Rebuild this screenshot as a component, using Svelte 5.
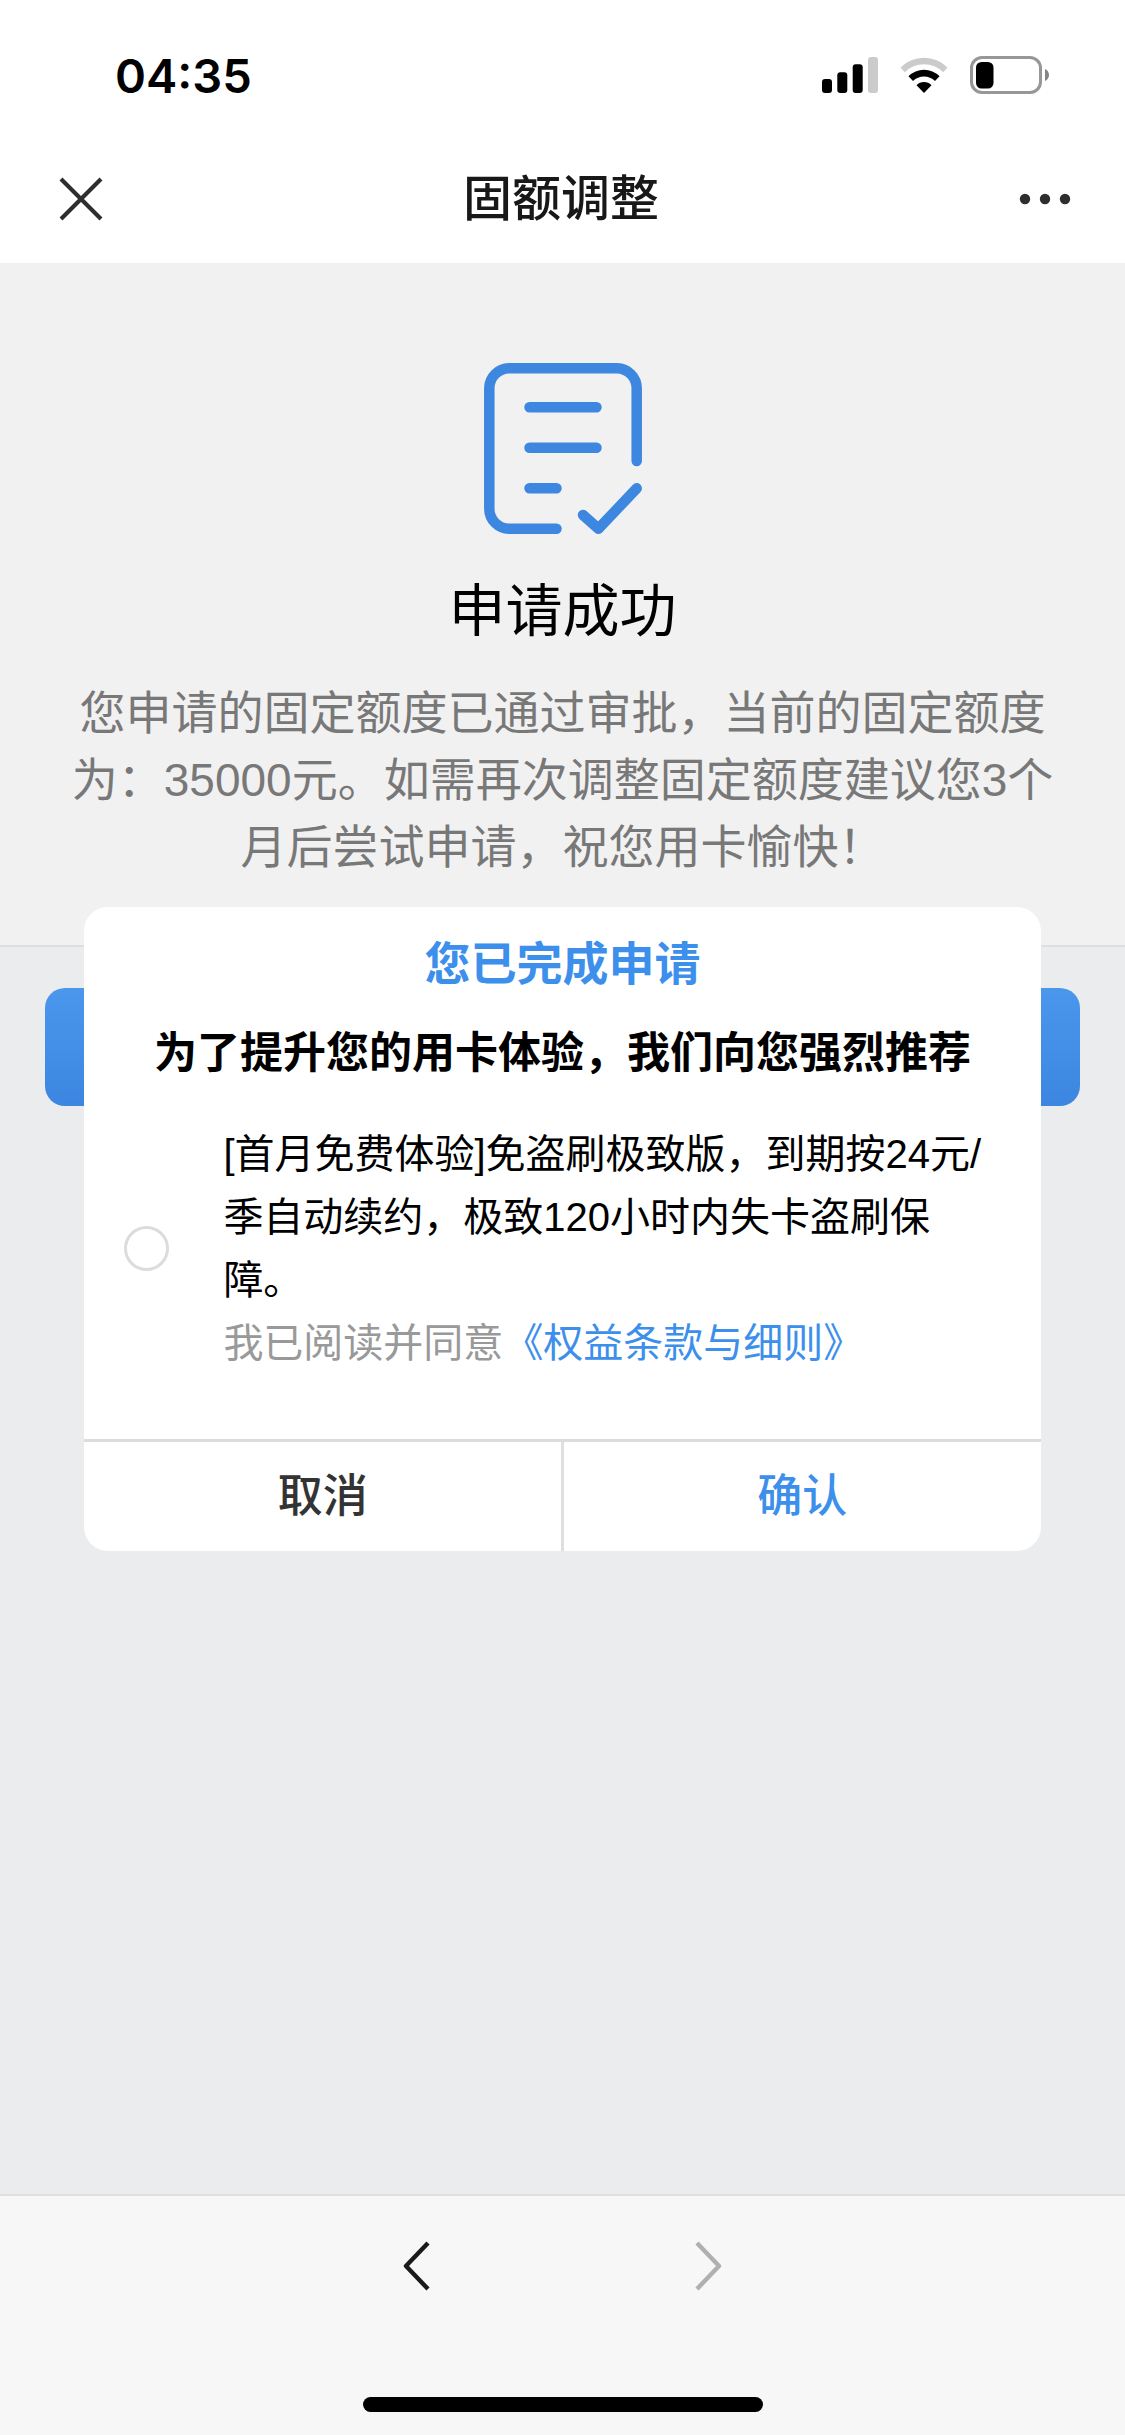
<script lang="ts">
  let agreed = $state(false);
  let dialogOpen = $state(true);

  function closeDialog() {
    dialogOpen = false;
  }
</script>

<div class="screen">
  <div class="status-bar">
    <span class="time">04:35</span>
    <div class="status-icons">
      <svg width="56" height="36" viewBox="0 0 56 36" aria-hidden="true">
        <rect x="0" y="22" width="10" height="14" rx="3" />
        <rect x="15.3" y="15.3" width="10" height="20.7" rx="3" />
        <rect x="30.7" y="7.3" width="10" height="28.7" rx="3" />
        <rect x="46" y="0" width="10" height="36" rx="3" fill="#cbcbcb" />
      </svg>
      <svg width="48" height="36" viewBox="0 0 48 36" aria-hidden="true">
        <path d="M0.5 10.5 A33.5 33.5 0 0 1 47.5 10.5 L43.2 15.2 A27.2 27.2 0 0 0 4.8 15.2 Z" fill="#cbcbcb" />
        <path d="M8.5 19.2 A22 22 0 0 1 39.5 19.2 L35 24 A15.6 15.6 0 0 0 13 24 Z" />
        <path d="M16.5 28.2 A10.4 10.4 0 0 1 31.5 28.2 L24 36 Z" />
      </svg>
      <svg width="80" height="38" viewBox="0 0 80 38" aria-hidden="true">
        <rect x="1.5" y="1.5" width="69" height="35" rx="10.5" fill="none" stroke="#979797" stroke-width="3" />
        <rect x="6" y="6" width="17.5" height="26.500" rx="5.5" />
        <path d="M75 13 C77.600 14 79 16.500 79 19 C79 21.500 77.600 24 75 25 Z" fill="#858585" />
      </svg>
    </div>
  </div>

  <header class="nav-bar">
    <button class="icon-btn" aria-label="关闭">
      <svg width="44" height="44" viewBox="0 0 44 44" fill="none" stroke="#2e2e2e" stroke-width="4.2">
        <path d="M2 2 L42 42 M42 2 L2 42" />
      </svg>
    </button>
    <h1>固额调整</h1>
    <button class="icon-btn" aria-label="更多">
      <svg width="52" height="44" viewBox="0 0 52 44" fill="#2e2e2e">
        <circle cx="6" cy="22" r="5.2" />
        <circle cx="26" cy="22" r="5.2" />
        <circle cx="46" cy="22" r="5.2" />
      </svg>
    </button>
  </header>

  <main>
    <section class="result">
      <svg
        width="158"
        height="171"
        viewBox="0 0 158 171"
        fill="none"
        stroke="#3d87e0"
        stroke-width="10.5"
        stroke-linecap="round"
        stroke-linejoin="round"
        aria-hidden="true"
      >
        <path d="M152.700 98 V25 A20 20 0 0 0 133 5.300 H25 A20 20 0 0 0 5.300 25 V146 A20 20 0 0 0 25 165.700 H72.500" />
        <path d="M45.500 44.200 H112.500 M45.500 84.800 H112.500 M45.500 125.300 H72.500" />
        <path d="M99 152 L114.500 165.700 L152.700 125.300" />
      </svg>
      <h2>申请成功</h2>
      <p>您申请的固定额度已通过审批，当前的固定额度为：35000元。如需再次调整固定额度建议您3个月后尝试申请，祝您用卡愉快！</p>
    </section>

    <button class="primary-btn" aria-label="完成"></button>

    {#if dialogOpen}
      <div class="overlay">
        <div class="dialog" role="dialog" aria-labelledby="dialog-title">
          <h3 id="dialog-title">您已完成申请</h3>
          <p class="subtitle">为了提升您的用卡体验，我们向您强烈推荐</p>

          <div class="offer">
            <input id="offer" type="checkbox" bind:checked={agreed} />
            <div class="offer-text">
              <label for="offer">[首月免费体验]免盗刷极致版，到期按24元/季自动续约，极致120小时内失卡盗刷保障。</label>
              <p class="terms">我已阅读并同意<a href="#terms">《权益条款与细则》</a></p>
            </div>
          </div>

          <div class="actions">
            <button onclick={closeDialog}>取消</button>
            <button class="confirm" onclick={closeDialog}>确认</button>
          </div>
        </div>
      </div>
    {/if}
  </main>

  <footer>
    <nav>
      <button class="icon-btn" aria-label="后退">
        <svg width="28" height="52" viewBox="0 0 28 52" fill="none" stroke="#1a1a1a" stroke-width="4.4" stroke-linejoin="round">
          <path d="M25 3 L3 26 L25 49" />
        </svg>
      </button>
      <button class="icon-btn" aria-label="前进" disabled>
        <svg width="28" height="52" viewBox="0 0 28 52" fill="none" stroke="#b0b0b0" stroke-width="4.4" stroke-linejoin="round">
          <path d="M2 3 L24 26 L2 49" />
        </svg>
      </button>
    </nav>
    <div class="home-indicator"></div>
  </footer>
</div>

<style>
  :global(body) {
    margin: 0;
    background: #ebecee;
  }

  .screen {
    display: flex;
    flex-direction: column;
    min-height: 100vh;
    color: #000;
    font-family: "Liberation Sans", "Noto Sans CJK SC", sans-serif;
  }

  h1,
  h2,
  h3,
  p {
    margin: 0;
  }

  button {
    padding: 0;
    border: none;
    background: none;
    font-family: inherit;
    cursor: pointer;
  }

  svg {
    display: block;
  }

  .status-bar {
    display: flex;
    align-items: center;
    justify-content: space-between;
    height: 150px;
    padding: 0 75px 0 115px;
    background: #fff;
  }

  .time {
    font-family: Inter, sans-serif;
    font-size: 47px;
    font-weight: 600;
  }

  .status-icons {
    display: flex;
    align-items: center;
    gap: 22px;
  }

  .nav-bar {
    display: flex;
    align-items: center;
    justify-content: space-between;
    height: 113px;
    padding: 0 54px 16px 59px;
    box-sizing: border-box;
    background: #fff;
  }

  .nav-bar h1 {
    color: #181818;
    font-size: 49px;
    font-weight: 500;
    line-height: 66px;
  }

  main {
    position: relative;
    display: flex;
    flex: 1;
    flex-direction: column;
  }

  .result {
    display: flex;
    flex-direction: column;
    align-items: center;
    padding: 100px 64px 64px;
    border-bottom: 2px solid #dedfe2;
    background: #f1f1f1;
  }

  .result h2 {
    margin-top: 39px;
    font-size: 57px;
    font-weight: 400;
    line-height: 76px;
  }

  .result p {
    margin-top: 31px;
    color: #787878;
    font-size: 46px;
    line-height: 67px;
    text-align: center;
  }

  .primary-btn {
    height: 118px;
    margin: 41px 45px 0;
    border-radius: 20px;
    background: linear-gradient(#4b97ec, #3c86e1);
  }

  .overlay {
    position: absolute;
    inset: 0;
    display: flex;
    align-items: center;
    justify-content: center;
  }

  .dialog {
    width: 85%;
    overflow: hidden;
    border-radius: 24px;
    background: #fff;
  }

  .dialog h3 {
    padding-top: 24px;
    color: #3d8fec;
    font-size: 46px;
    font-weight: 700;
    line-height: 66px;
    text-align: center;
  }

  .subtitle {
    margin-top: 23px;
    font-size: 43px;
    font-weight: 700;
    line-height: 66px;
    text-align: center;
  }

  .offer {
    display: flex;
    align-items: center;
    gap: 54px;
    padding: 37px 44px 64px 40px;
    font-size: 40px;
    line-height: 63px;
  }

  .offer input {
    flex: none;
    width: 45px;
    height: 45px;
    margin: 0;
    border: 3px solid #dcdcdc;
    border-radius: 50%;
    appearance: none;
    background: #fff;
  }

  .offer input:checked {
    border-color: #3d8fec;
    background: #3d8fec;
  }

  .offer-text label {
    display: block;
  }

  .terms {
    color: #999;
  }

  .terms a {
    color: #3d8fec;
    text-decoration: none;
  }

  .actions {
    display: flex;
    border-top: 3px solid #dcdcdc;
  }

  .actions button {
    flex: 1;
    height: 109px;
    padding-bottom: 8px;
    color: #333;
    font-size: 45px;
    font-weight: 500;
  }

  .actions .confirm {
    border-left: 3px solid #dfdfdf;
    color: #3d8fec;
  }

  footer {
    display: flex;
    flex-direction: column;
    align-items: center;
    justify-content: space-between;
    height: 241px;
    padding: 44px 0 23px;
    box-sizing: border-box;
    border-top: 2px solid #dedfe0;
    background: #f7f7f7;
  }

  nav {
    display: flex;
    gap: 264px;
  }

  .home-indicator {
    width: 400px;
    height: 15px;
    border-radius: 8px;
    background: #000;
  }
</style>
